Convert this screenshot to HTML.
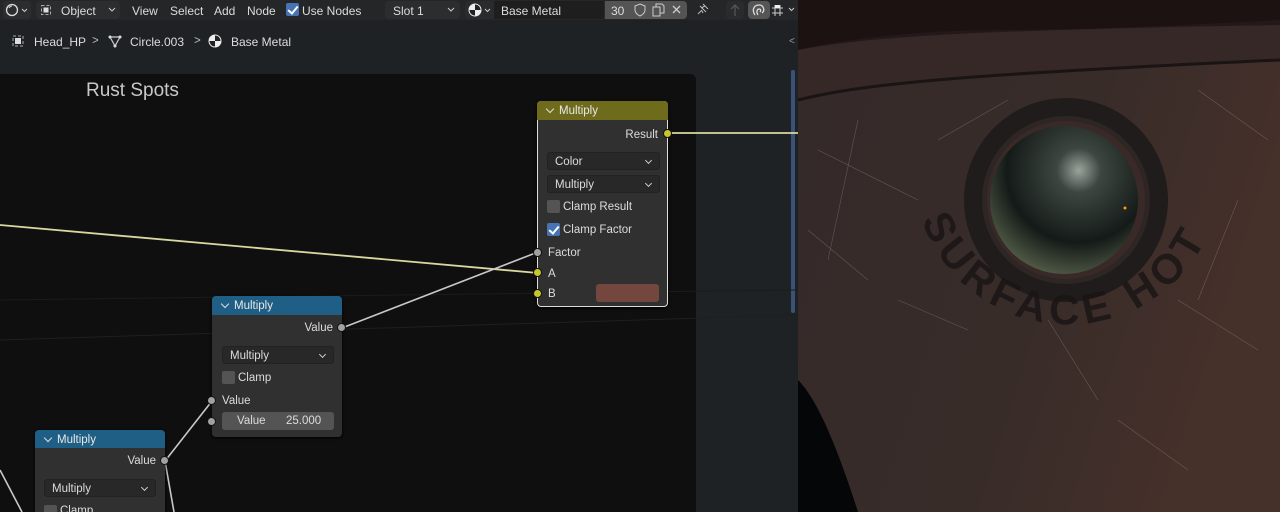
<!DOCTYPE html>
<html><head><style>
*{margin:0;padding:0;box-sizing:border-box}
html,body{width:1280px;height:512px;overflow:hidden}
body{background:#1f2224;font-family:"Liberation Sans",sans-serif;font-size:11.5px;color:#dcdcdc;position:relative}
.a{position:absolute}
.top{left:0;top:0;width:798px;height:20px;background:#242628}
.btn{position:absolute;top:1px;height:18px;border-radius:4px;background:#2c2d2f;}
.node{position:absolute;background:#303030;border-radius:4px;box-shadow:0 1px 3px #000}
.hdr{height:20px;border-radius:4px 4px 0 0;padding-left:22px;line-height:21px;color:#e8e8e8;position:relative}
.hdr:before{content:"";position:absolute;left:10px;top:5px;width:5px;height:5px;border-right:1.3px solid #ddd;border-bottom:1.3px solid #ddd;transform:rotate(45deg)}
.dd{position:absolute;height:18px;background:#282828;border-radius:3px;padding-left:7px;line-height:19px;border:1px solid #222}
.dd:after{content:"";position:absolute;right:8px;top:5px;width:4px;height:4px;border-right:1.2px solid #ccc;border-bottom:1.2px solid #ccc;transform:rotate(45deg)}
.cb{position:absolute;width:13px;height:13px;border-radius:2px;background:#545454}
.cbon{background:#4772b3}
.cbon:after{content:"";position:absolute;left:4px;top:1px;width:4px;height:8px;border-right:2px solid #fff;border-bottom:2px solid #fff;transform:rotate(40deg)}
.sock{position:absolute;width:9px;height:9px;border-radius:50%;border:1px solid #111}
.y{background:#c7c729}.g{background:#a1a1a1}
.t{position:absolute;white-space:nowrap;margin-top:2px}
</style></head><body>
<div class="a top"></div>
<div class="btn" style="left:3px;width:28px;background:#2c2d2f"></div>
<svg class="a" style="left:5px;top:3px" width="24" height="14"><circle cx="7" cy="7" r="5.5" fill="none" stroke="#ddd" stroke-width="1.3"/><path d="M4 5 A3.5 3.5 0 0 1 7 3" stroke="#ddd" fill="none"/><path d="M17 6 l2.5 2.5 2.5-2.5" stroke="#ccc" fill="none"/></svg>
<div class="btn" style="left:36px;width:84px"></div>
<svg class="a" style="left:40px;top:4px" width="12" height="12"><rect x="1.5" y="1.5" width="9" height="9" fill="none" stroke="#aaa" stroke-dasharray="3 2"/><rect x="3.5" y="3.5" width="5" height="5" fill="#ddd"/></svg>
<div class="t" style="left:61px;top:2px;font-size:12px">Object</div>
<svg class="a" style="left:108px;top:6px" width="10" height="8"><path d="M1 2 l3 3 3-3" stroke="#ccc" fill="none"/></svg>
<div class="t" style="left:132px;top:2px;font-size:12px">View</div>
<div class="t" style="left:170px;top:2px;font-size:12px">Select</div>
<div class="t" style="left:214px;top:2px;font-size:12px">Add</div>
<div class="t" style="left:247px;top:2px;font-size:12px">Node</div>
<div class="cb cbon" style="left:286px;top:3px"></div>
<div class="t" style="left:302px;top:2px;font-size:12px">Use Nodes</div>
<div class="btn" style="left:385px;width:75px"></div>
<div class="t" style="left:393px;top:2px;font-size:12px">Slot 1</div>
<svg class="a" style="left:447px;top:6px" width="10" height="8"><path d="M1 2 l3 3 3-3" stroke="#ccc" fill="none"/></svg>
<div class="btn" style="left:465px;width:222px;background:#2a2b2d"></div>
<svg class="a" style="left:468px;top:3px" width="26" height="14"><circle cx="7" cy="7" r="6" fill="#eeeeee"/><path d="M7 1 A6 6 0 0 1 13 7 L7 7 Z" fill="#222"/><path d="M7 7 L1 7 A6 6 0 0 0 7 13 Z" fill="#222"/><circle cx="7" cy="7" r="6" fill="none" stroke="#eee" stroke-width="1"/><path d="M17 6 l2.5 2.5 2.5-2.5" stroke="#ccc" fill="none"/></svg>
<div class="a" style="left:494px;top:1px;width:110px;height:18px;background:#1e1e1e"></div>
<div class="t" style="left:501px;top:2px;font-size:12px">Base Metal</div>
<div class="a" style="left:605px;top:1px;width:82px;height:18px;background:#545454;border-radius:0 4px 4px 0"></div>
<div class="t" style="left:611px;top:2px;font-size:12px">30</div>
<svg class="a" style="left:632px;top:2px" width="54" height="16"><path d="M8 2 l5 2 v4 c0 3-3 5-5 6 c-2-1-5-3-5-6 v-4z" fill="none" stroke="#ccc"/><rect x="21" y="5" width="7" height="9" fill="none" stroke="#ccc"/><path d="M24 5 v-3 h6 l2 2 v7 h-4" fill="none" stroke="#ccc"/><path d="M41 4 l7 7 M48 4 l-7 7" stroke="#ccc" stroke-width="1.3"/></svg>
<svg class="a" style="left:694px;top:2px" width="16" height="16"><path d="M4 12 l4-4 M6 4 l6 6 M9 2 l5 5 M7 6 l4-2 M9 11 l-1-2" stroke="#bbb" fill="none"/></svg>
<div class="btn" style="left:726px;width:18px;background:#2a2b2d"></div>
<svg class="a" style="left:728px;top:2px" width="14" height="16"><path d="M7 14 V3 M3 7 l4-4 4 4" stroke="#555" fill="none" stroke-width="1.3"/></svg>
<div class="btn" style="left:748px;width:22px;background:#555"></div>
<svg class="a" style="left:750px;top:2px" width="18" height="16"><path d="M5 13 C2 9 3 3 9 3 C14 3 15 9 12 11 M8 13 C6 10 7 7 9 7 C11 7 11 9 10 10" stroke="#ddd" fill="none" stroke-width="1.3"/></svg>
<svg class="a" style="left:771px;top:2px" width="27" height="16"><path d="M4 3 v11 M9 3 v11 M1 6 h11 M1 11 h11" stroke="#ccc"/><rect x="4" y="3" width="5" height="3" fill="#eee"/><path d="M18 6 l2.5 2.5 2.5-2.5" stroke="#ccc" fill="none"/></svg>
<svg class="a" style="left:12px;top:35px" width="12" height="12"><rect x="1" y="1" width="10" height="10" fill="none" stroke="#aaa" stroke-dasharray="3 2"/><rect x="3" y="3" width="6" height="6" fill="#ddd"/></svg>
<div class="t" style="left:34px;top:33px;font-size:12px">Head_HP</div>
<div class="t" style="left:92px;top:33px;color:#bbb">&gt;</div>
<svg class="a" style="left:108px;top:34px" width="14" height="14"><path d="M2 3 h10 l-5 9z" fill="none" stroke="#ccc" stroke-width="1.2"/><circle cx="2" cy="3" r="1.5" fill="#ddd"/><circle cx="12" cy="3" r="1.5" fill="#ddd"/><circle cx="7" cy="12" r="1.5" fill="#ddd"/></svg>
<div class="t" style="left:130px;top:33px;font-size:12px">Circle.003</div>
<div class="t" style="left:194px;top:33px;color:#bbb">&gt;</div>
<svg class="a" style="left:208px;top:34px" width="14" height="14"><circle cx="7" cy="7" r="6" fill="#eeeeee"/><path d="M7 1 A6 6 0 0 1 13 7 L7 7 Z" fill="#222"/><path d="M7 7 L1 7 A6 6 0 0 0 7 13 Z" fill="#222"/><circle cx="7" cy="7" r="6" fill="none" stroke="#eee" stroke-width="1"/></svg>
<div class="t" style="left:231px;top:33px;font-size:12px">Base Metal</div>
<div class="t" style="left:789px;top:34px;color:#999;font-size:10px">&lt;</div>
<div class="a" style="left:-10px;top:74px;width:706px;height:438px;background:#0f0f0f;border-radius:6px 6px 0 0"></div>
<div class="t" style="left:86px;top:78px;font-size:19px;color:#c8c8c8">Rust Spots</div>
<div class="a" style="left:791px;top:70px;width:4px;height:243px;background:#3b5277;border-radius:2px"></div>
<svg class="a" style="left:0;top:0" width="798" height="512">
<path d="M0 300 L798 290" stroke="#1a1c1c" stroke-width="1"/>
<path d="M0 340 L798 315" stroke="#1d1f20" stroke-width="1"/>
<path d="M0 225 L538 273" stroke="#d8d8a0" stroke-width="1.8"/>
<path d="M668 133 L798 133" stroke="#d8d8a0" stroke-width="1.8"/>
<path d="M342 328 L538 252" stroke="#c8c8c8" stroke-width="1.6"/>
<path d="M165 461 L212 401" stroke="#c8c8c8" stroke-width="1.6"/>
<path d="M165 461 L174 512" stroke="#c8c8c8" stroke-width="1.6"/>
<path d="M0 470 L22 512" stroke="#c8c8c8" stroke-width="1.6"/>
</svg>
<div class="node" style="left:537px;top:101px;width:131px;height:206px;border:1px solid #ddd">
 <div class="hdr" style="background:#6e6c1c;height:19px;margin:-1px -1px 0;border-radius:4px 4px 0 0;">Multiply</div>
 <div class="t" style="right:9px;top:25px">Result</div>
 <div class="dd" style="left:9px;top:50px;width:113px">Color</div>
 <div class="dd" style="left:9px;top:73px;width:113px">Multiply</div>
 <div class="cb" style="left:9px;top:98px"></div><div class="t" style="left:25px;top:97px">Clamp Result</div>
 <div class="cb cbon" style="left:9px;top:121px"></div><div class="t" style="left:25px;top:120px">Clamp Factor</div>
 <div class="t" style="left:10px;top:143px">Factor</div>
 <div class="t" style="left:10px;top:164px">A</div>
 <div class="t" style="left:10px;top:184px">B</div>
 <div class="a" style="left:58px;top:182px;width:63px;height:18px;background:#74473e;border-radius:3px"></div>
</div>
<div class="sock y" style="left:663px;top:129px"></div>
<div class="sock g" style="left:533px;top:248px"></div>
<div class="sock y" style="left:533px;top:268px"></div>
<div class="sock y" style="left:533px;top:289px"></div>
<div class="node" style="left:212px;top:296px;width:130px;height:141px">
 <div class="hdr" style="background:#1f5f85;height:19px">Multiply</div>
 <div class="t" style="right:9px;top:24px">Value</div>
 <div class="dd" style="left:10px;top:50px;width:112px">Multiply</div>
 <div class="cb" style="left:10px;top:75px"></div><div class="t" style="left:26px;top:74px">Clamp</div>
 <div class="t" style="left:10px;top:97px">Value</div>
 <div class="a" style="left:10px;top:116px;width:112px;height:18px;background:#545454;border-radius:3px"></div>
 <div class="t" style="left:25px;top:117px">Value</div><div class="t" style="left:74px;top:117px">25.000</div>
</div>
<div class="sock g" style="left:337px;top:323px"></div>
<div class="sock g" style="left:207px;top:396px"></div>
<div class="sock g" style="left:207px;top:417px"></div>
<div class="node" style="left:35px;top:430px;width:130px;height:82px;border-radius:4px 4px 0 0">
 <div class="hdr" style="background:#1f5f85;height:18px">Multiply</div>
 <div class="t" style="right:9px;top:23px">Value</div>
 <div class="dd" style="left:9px;top:49px;width:112px">Multiply</div>
 <div class="cb" style="left:9px;top:75px"></div><div class="t" style="left:25px;top:73px">Clamp</div>
</div>
<div class="sock g" style="left:160px;top:456px"></div>
<svg class="a" style="left:798px;top:0" width="482" height="512">
<defs>
<linearGradient id="bg" x1="0" y1="0" x2="1" y2="0.3"><stop offset="0" stop-color="#342a29"/><stop offset="0.6" stop-color="#382c29"/><stop offset="1" stop-color="#46302a"/></linearGradient>
<radialGradient id="sp" cx="0.6" cy="0.3" r="0.75"><stop offset="0" stop-color="#9aa39c"/><stop offset="0.2" stop-color="#3d4640"/><stop offset="0.65" stop-color="#141a18"/><stop offset="1" stop-color="#56604a"/></radialGradient>
<path id="arc" d="M124 220 A150 150 0 0 0 416 120"/>
</defs>
<rect width="482" height="512" fill="#24191a"/>
<path d="M0 0 H482 V20 C380 25 300 30 200 30 C120 30 40 40 0 50Z" fill="#1c1212"/>
<path d="M0 50 C80 35 200 30 482 25 V70 L0 100Z" fill="#362826"/>
<path d="M0 100 C60 85 150 75 482 60 V512 H60 C40 450 20 400 0 380Z" fill="url(#bg)"/>
<path d="M0 380 C20 400 40 450 60 512 H0Z" fill="#050608"/>
<path d="M0 100 C60 85 150 75 482 60" stroke="#1a1414" stroke-width="3" fill="none"/>
<g stroke="#9a8b88" stroke-width="0.6" opacity="0.45">
<path d="M20 150 L120 200 M60 120 L30 260 M300 120 L360 160 M400 90 L470 140 M440 200 L400 300 M100 300 L170 330 M250 320 L300 400 M380 300 L460 350 M10 230 L70 280 M140 140 L210 100 M320 420 L390 470"/>
</g>
<circle cx="268" cy="200" r="102" fill="#201c1c"/>
<circle cx="268" cy="200" r="84" fill="#2e2624"/>
<circle cx="268" cy="200" r="79" fill="#3a2a27"/>
<circle cx="266" cy="200" r="74" fill="url(#sp)"/>
<circle cx="327" cy="208" r="1.5" fill="#f90"/>
<text font-family="Liberation Sans,sans-serif" font-weight="bold" font-size="42" fill="#1a1616" opacity="0.85" letter-spacing="6"><textPath href="#arc">SURFACE HOT</textPath></text>
</svg>
</body></html>
